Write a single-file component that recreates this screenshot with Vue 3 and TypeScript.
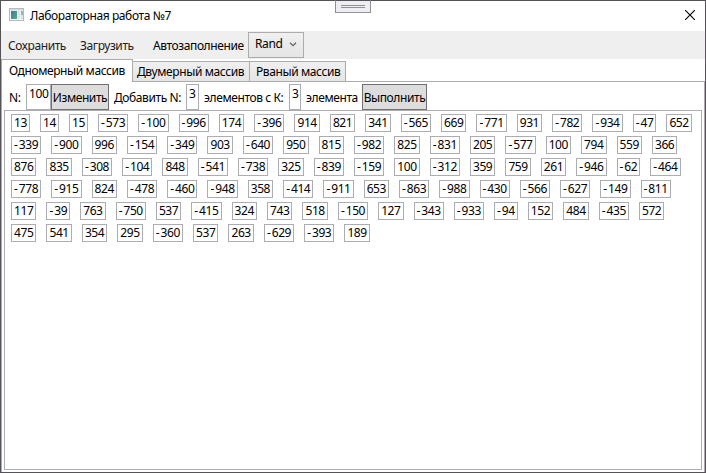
<script setup lang="ts">
import { ref } from 'vue'

const tabs = ['Одномерный массив', 'Двумерный массив', 'Рваный массив']
const activeTab = ref(0)
const numbers: number[] = [
  13, 14, 15, -573, -100, -996, 174, -396, 914, 821, 341, -565, 669, -771, 931, -782, -934, -47, 652,
  -339, -900, 996, -154, -349, 903, -640, 950, 815, -982, 825, -831, 205, -577, 100, 794, 559, 366,
  876, 835, -308, -104, 848, -541, -738, 325, -839, -159, 100, -312, 359, 759, 261, -946, -62, -464,
  -778, -915, 824, -478, -460, -948, 358, -414, -911, 653, -863, -988, -430, -566, -627, -149, -811,
  117, -39, 763, -750, 537, -415, 324, 743, 518, -150, 127, -343, -933, -94, 152, 484, -435, 572,
  475, 541, 354, 295, -360, 537, 263, -629, -393, 189,
]
</script>

<template>
  <div class="window">
    <div class="grip"><i></i><i></i></div>
    <header class="titlebar">
      <svg class="app-icon" width="16" height="14" viewBox="0 0 16 14">
        <defs>
          <linearGradient id="pane" x1="0" y1="0" x2="1" y2="1">
            <stop offset="0" stop-color="#4774a8" />
            <stop offset="1" stop-color="#4fae7d" />
          </linearGradient>
        </defs>
        <rect x="0.5" y="0.5" width="14" height="12" fill="#f2f4f6" stroke="#b4bac0" />
        <rect x="1" y="1" width="13" height="1.5" fill="#d5dade" />
        <rect x="2" y="3" width="6" height="8" fill="url(#pane)" />
        <rect x="9" y="3" width="2" height="8" fill="#dce1e6" />
        <rect x="12" y="3" width="2" height="4" fill="#8fb9a5" />
        <rect x="12" y="7" width="2" height="4" fill="#dce1e6" />
      </svg>
      <span class="title">Лабораторная работа №7</span>
      <svg class="close" width="10" height="10" viewBox="0 0 10 10">
        <path d="M0 0L10 10M10 0L0 10" stroke="#000" stroke-width="1.1" />
      </svg>
    </header>
    <nav class="toolbar">
      <span class="menu save">Сохранить</span>
      <span class="menu load">Загрузить</span>
      <span class="menu auto">Автозаполнение</span>
      <div class="combo">
        <span>Rand</span>
        <svg width="8" height="5" viewBox="0 0 8 5">
          <path d="M1 0.8L4 3.6L7 0.8" fill="none" stroke="#606060" stroke-width="1.2" />
        </svg>
      </div>
    </nav>
    <div class="tabs">
      <div
        v-for="(tab, i) in tabs"
        :key="tab"
        :class="['tab', 'tab' + i, { active: i === activeTab }]"
        @click="activeTab = i"
      >{{ tab }}</div>
    </div>
    <main class="content">
      <div class="controls">
        <span class="label n">N:</span>
        <div class="field size">100</div>
        <div class="button change">Изменить</div>
        <span class="label add">Добавить N:</span>
        <div class="field count">3</div>
        <span class="label from">элементов с К:</span>
        <div class="field pos">3</div>
        <span class="label elem">элемента</span>
        <div class="button run">Выполнить</div>
      </div>
      <div class="panel">
        <div
          v-for="(n, i) in numbers"
          :key="i"
          :class="['cell', 'd' + String(Math.abs(n)).length, { neg: n < 0 }]"
        ><span v-if="n < 0" class="minus">-</span>{{ Math.abs(n) }}</div>
      </div>
    </main>
  </div>
</template>

<style>
body {
  overflow: hidden;
}
</style>

<style scoped>
* {
  box-sizing: border-box;
}
.window {
  position: relative;
  display: flex;
  flex-direction: column;
  width: 706px;
  height: 473px;
  border: 1px solid #57525a;
  background: #fff;
  color: #000;
  font-family: 'Noto Sans', 'Open Sans', sans-serif;
  font-size: 12px;
  letter-spacing: -0.4px;
  line-height: 16px;
  white-space: nowrap;
}
.grip {
  position: absolute;
  left: 334px;
  top: -1px;
  width: 36px;
  height: 13px;
  padding: 4px 5px 0;
  border: 1px solid #929198;
  border-top-color: #57525a;
  background: #eeeef2;
}
.grip i {
  display: block;
  height: 1px;
  margin-bottom: 1px;
  background: #929198;
}
.titlebar {
  display: flex;
  align-items: center;
  height: 30px;
  padding: 0 10px 2px 8px;
}
.title {
  margin-left: 5px;
  padding-top: 2px;
}
.close {
  margin-left: auto;
}
.toolbar {
  display: flex;
  height: 28px;
  padding-left: 7px;
  background: #efefef;
}
.menu {
  padding-top: 7px;
  color: #212121;
}
.save {
  width: 72px;
}
.load {
  width: 73px;
}
.auto {
  width: 95px;
  color: #000;
}
.combo {
  display: flex;
  justify-content: space-between;
  width: 56px;
  height: 26px;
  margin-top: 1px;
  padding: 3px 6px 0;
  border: 1px solid #acacac;
  background: linear-gradient(#f0f0f0, #e5e5e5);
}
.combo svg {
  margin-top: 6px;
}
.tabs {
  display: flex;
  align-items: flex-end;
  height: 23px;
}
.tab {
  height: 21px;
  padding: 2px 0 0 4px;
  border: 1px solid #acacac;
  background: linear-gradient(#f0f0f0, #e5e5e5);
}
.tab.active {
  position: relative;
  z-index: 1;
  height: 23px;
  padding: 3px 0 0 7px;
  border-bottom: 0;
  background: #fff;
}
.tab0 {
  width: 132px;
}
.tab1 {
  width: 118px;
  margin-left: -1px;
}
.tab2 {
  width: 97px;
  padding-left: 6px;
  margin-left: -1px;
}
.content {
  display: flex;
  flex: 1;
  flex-direction: column;
  margin-top: -1px;
  padding: 2px 2px 2px;
  border: 1px solid #acacac;
  border-bottom: 0;
}
.controls {
  display: flex;
  height: 26px;
}
.label {
  padding-top: 6px;
}
.n {
  width: 22px;
  padding-left: 5px;
}
.field {
  height: 26px;
  padding-left: 2px;
  border: 1px solid #abadb3;
  line-height: 18px;
}
.size {
  width: 25px;
}
.count {
  width: 13px;
}
.pos {
  width: 12px;
}
.button {
  display: flex;
  align-items: center;
  justify-content: center;
  height: 26px;
  padding-top: 1px;
  border: 1px solid #707070;
  background: #ddd;
}
.change {
  width: 58px;
}
.add {
  width: 77px;
  padding-left: 5px;
}
.from {
  width: 90px;
  padding-left: 5px;
}
.elem {
  width: 61px;
  padding-left: 5px;
}
.run {
  width: 65px;
}
.panel {
  display: flex;
  flex: 1;
  flex-wrap: wrap;
  align-content: flex-start;
  gap: 4px 10px;
  padding: 3px 5px 0 6px;
  border: 1px solid #abadb3;
}
.cell {
  width: 25.45px;
  height: 18px;
  padding-left: 2px;
  border: 1px solid #abadb3;
}
.cell.d2 {
  width: 19px;
}
.cell.neg {
  width: 30.25px;
}
.cell.neg.d2 {
  width: 23.75px;
}
.minus {
  display: inline-block;
  width: 4.8px;
}
</style>
